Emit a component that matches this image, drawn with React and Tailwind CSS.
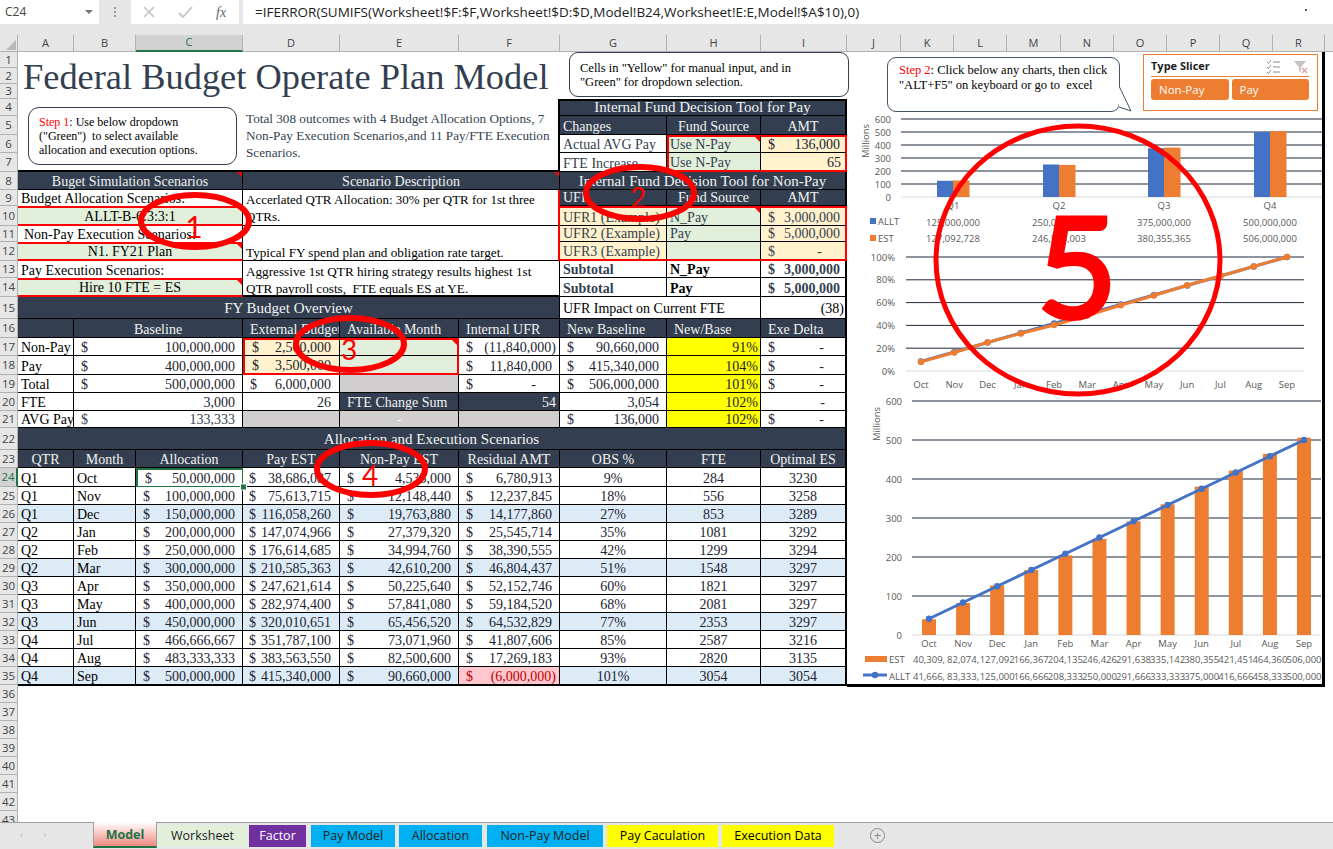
import React from "react";

const RED_T = "border-t-2 border-t-[#ff0000]";
const RED_B = "border-b-2 border-b-[#ff0000]";
const RED_L = "border-l-2 border-l-[#ff0000]";
const RED_R = "border-r-2 border-r-[#ff0000]";
const DARK = "bg-[#333f50] text-[#f2f2f2] justify-center";
const HEAD = "bg-[#333f50] text-[#f2f2f2] justify-start pl-[7px] text-[13px]";
const BIG = "text-[15px]";
const GREEN = "bg-[#e2efda]";
const CREAM = "bg-[#fff2cc]";
const YEL = "bg-[#ffff00] justify-end pr-[2px]";
const GREY = "bg-[#d0cece]";
const LAST = "border-r-2";
const BAND = "bg-[#ddebf7]";

function Cell({ c = "", children }) {
  return (
    <div className={`relative flex items-end min-w-0 overflow-hidden whitespace-nowrap border-r border-b border-black px-[3px] pb-[0.5px] text-[14px] leading-none text-[#1c2431] ${c}`}>
      {children}
    </div>
  );
}

function Money({ v, pr = "pr-[4px]" }) {
  return (
    <div className={`flex w-full justify-between pl-[4px] ${pr}`}>
      <span>$</span>
      <span>{v}</span>
    </div>
  );
}

function Tri() {
  return <span className="absolute top-0 right-0 border-t-[5px] border-l-[5px] border-t-[#ff0000] border-l-transparent" />;
}

const COLS = [
  ["A", 56], ["B", 62], ["C", 107], ["D", 97], ["E", 119], ["F", 101], ["G", 107], ["H", 94], ["I", 86],
  ["J", 54], ["K", 53], ["L", 53], ["M", 54], ["N", 53], ["O", 53], ["P", 53], ["Q", 53], ["R", 52],
];

const ROWS = [16, 16, 15, 17, 19, 18, 19, 18, 16, 20, 16, 19, 17, 19, 22, 19, 18, 19, 18, 18, 17, 22, 18, 19, 18, 18, 18, 18, 18, 18, 18, 18, 18, 18, 18, 18, 18, 18, 18, 18, 18, 18, 18];

const DATA = [
  ["Q1", "Oct", "50,000,000", "38,686,087", "4,533,000", "6,780,913", "9%", "284", "3230"],
  ["Q1", "Nov", "100,000,000", "75,613,715", "12,148,440", "12,237,845", "18%", "556", "3258"],
  ["Q1", "Dec", "150,000,000", "116,058,260", "19,763,880", "14,177,860", "27%", "853", "3289"],
  ["Q2", "Jan", "200,000,000", "147,074,966", "27,379,320", "25,545,714", "35%", "1081", "3292"],
  ["Q2", "Feb", "250,000,000", "176,614,685", "34,994,760", "38,390,555", "42%", "1299", "3294"],
  ["Q2", "Mar", "300,000,000", "210,585,363", "42,610,200", "46,804,437", "51%", "1548", "3297"],
  ["Q3", "Apr", "350,000,000", "247,621,614", "50,225,640", "52,152,746", "60%", "1821", "3297"],
  ["Q3", "May", "400,000,000", "282,974,400", "57,841,080", "59,184,520", "68%", "2081", "3297"],
  ["Q3", "Jun", "450,000,000", "320,010,651", "65,456,520", "64,532,829", "77%", "2353", "3297"],
  ["Q4", "Jul", "466,666,667", "351,787,100", "73,071,960", "41,807,606", "85%", "2587", "3216"],
  ["Q4", "Aug", "483,333,333", "383,563,550", "82,500,600", "17,269,183", "93%", "2820", "3135"],
  ["Q4", "Sep", "500,000,000", "415,340,000", "90,660,000", "(6,000,000)", "101%", "3054", "3054"],
];

const MONTHS = ["Oct", "Nov", "Dec", "Jan", "Feb", "Mar", "Apr", "May", "Jun", "Jul", "Aug", "Sep"];
const EST = [40.309, 82.074, 127.092, 166.367, 204.135, 246.426, 291.638, 335.142, 380.355, 421.451, 464.36, 506];
const ALLT = [41.666, 83.333, 125, 166.666, 208.333, 250, 291.666, 333.333, 375, 416.666, 458.333, 500];
const ESTL = ["40,309,", "82,074,", "127,092", "166,367", "204,135", "246,426", "291,638", "335,142", "380,355", "421,451", "464,360", "506,000"];
const ALLTL = ["41,666,", "83,333,", "125,000", "166,666", "208,333", "250,000", "291,666", "333,333", "375,000", "416,666", "458,333", "500,000"];

function FormulaBar() {
  return (
    <div className="flex h-[35px] items-start gap-[4px] bg-[#e6e6e6] font-['Open_Sans',sans-serif] text-[#444]">
      <div className="flex h-[24px] w-[99px] items-center justify-between bg-white pl-[5px] pr-[6px] text-[12px]">
        <span>C24</span>
        <span className="border-x-[4px] border-t-[4px] border-x-transparent border-t-[#777]" />
      </div>
      <div className="flex h-[24px] w-[24px] flex-col items-center justify-center gap-[2px]">
        <span className="h-[2px] w-[2px] bg-[#999]" />
        <span className="h-[2px] w-[2px] bg-[#999]" />
        <span className="h-[2px] w-[2px] bg-[#999]" />
      </div>
      <div className="flex h-[24px] w-[108px] items-center bg-white">
        <svg width="108" height="24" viewBox="0 0 108 24" className="block">
          <path d="M13 7l10 10M23 7L13 17" stroke="#c4c4c4" strokeWidth="1.6" fill="none" />
          <path d="M48 13l4 4 9-10" stroke="#c4c4c4" strokeWidth="1.8" fill="none" />
          <text x="85" y="17" fontFamily="Liberation Serif, serif" fontStyle="italic" fontSize="14" fill="#666">fx</text>
        </svg>
      </div>
      <div className="flex h-[24px] flex-1 items-center justify-between bg-white pl-[12px] pr-[26px] text-[13.5px] text-[#222]">
        <span>=IFERROR(SUMIFS(Worksheet!$F:$F,Worksheet!$D:$D,Model!B24,Worksheet!E:E,Model!$A$10),0)</span>
        <span className="mb-[4px] h-[2px] w-[2px] bg-[#555]" />
      </div>
    </div>
  );
}

function ColHeaders() {
  return (
    <div className="flex h-[17px] bg-[#e6e6e6] font-['Open_Sans',sans-serif] text-[11px] text-[#444]">
      <div className="relative w-[18px] shrink-0 border-b border-r border-[#b1b1b1]">
        <span className="absolute bottom-[1px] right-[1px] border-b-[10px] border-l-[10px] border-b-[#b8b8b8] border-l-transparent" />
      </div>
      {COLS.map(([n, w]) => (
        <div
          key={n}
          style={{ width: w }}
          className={`flex shrink-0 items-center justify-center border-r border-[#b1b1b1] ${n === "C" ? "border-b-2 border-b-[#217346] bg-[#d2d2d2] text-[#217346]" : "border-b border-b-[#b1b1b1]"}`}
        >
          {n}
        </div>
      ))}
      <div className="flex-1 border-b border-[#b1b1b1]" />
    </div>
  );
}

function RowHeaders() {
  return (
    <div className="w-[18px] shrink-0 overflow-hidden bg-[#e6e6e6] font-['Open_Sans',sans-serif] text-[11.5px] text-[#444]">
      {ROWS.map((h, i) => (
        <div
          key={i}
          style={{ height: h }}
          className={`flex items-center justify-center border-b border-b-[#b1b1b1] border-r ${i === 23 ? "border-r-2 border-r-[#217346] bg-[#d2d2d2] text-[#217346]" : "border-r-[#b1b1b1]"}`}
        >
          {i + 1}
        </div>
      ))}
    </div>
  );
}

function Sheet() {
  return (
    <div className="grid w-[829px] shrink-0 grid-cols-[56px_62px_107px_97px_119px_101px_107px_94px_86px] grid-rows-[47px_17px_19px_18px_19px_18px_16px_20px_16px_19px_17px_19px_22px_19px_18px_19px_18px_18px_17px_22px_18px_19px_18px_18px_18px_18px_18px_18px_18px_18px_18px_18px_18px] font-['Liberation_Serif',serif]">
      {/* Rows 1-3 */}
      <div className="col-span-6 flex items-center whitespace-nowrap pl-[5px] pt-[3px] text-[36.4px] leading-none text-[#333f50]">
        Federal Budget Operate Plan Model
      </div>
      <div className="col-span-3 pl-[9px]">
        <div className="flex h-[45px] w-[280px] flex-col justify-center rounded-[9px] border border-[#333f50] bg-white pl-[10px] text-[12.5px] leading-[14px] text-black">
          <span>Cells in "Yellow" for manual input, and in</span>
          <span>"Green" for dropdown selection.</span>
        </div>
      </div>

      {/* Rows 4-7 */}
      <div className="col-span-3 row-span-4 border-b-2 border-black pl-[10px] pt-[8px]">
        <div className="flex h-[58px] w-[209px] flex-col justify-center rounded-[11px] border border-[#333f50] pl-[10px] text-[12px] leading-[14px] text-black whitespace-pre">
          <span><span className="text-[#ff0000]">Step 1</span>: Use below dropdown</span>
          <span>("Green")  to select available</span>
          <span>allocation and execution options.</span>
        </div>
      </div>
      <div className="col-span-3 row-span-4 border-b-2 border-r-2 border-black pl-[3px] pr-[2px] pt-[11px] text-[13.2px] leading-[17px] text-[#333f50]">
        Total 308 outcomes with 4 Budget Allocation Options, 7 Non-Pay Execution Scenarios,and 11 Pay/FTE Execution Scenarios.
      </div>
      <Cell c={`col-span-3 ${DARK} ${LAST} ${BIG} border-t-2`}>Internal Fund Decision Tool for Pay</Cell>
      <Cell c="bg-[#333f50] text-[#f2f2f2]">Changes</Cell>
      <Cell c={DARK}>Fund Source</Cell>
      <Cell c={`${DARK} ${LAST}`}>AMT</Cell>
      <Cell c="text-[13px] text-[#333f50]">Actual AVG Pay</Cell>
      <Cell c={`${GREEN} ${RED_T} ${RED_L} pl-[1px] text-[#333f50]`}>Use N-Pay<Tri /></Cell>
      <Cell c={`${CREAM} ${RED_T} ${RED_R}`}><Money v="136,000" pr="pr-[2px]" /></Cell>
      <Cell c="text-[13px] text-[#333f50]">FTE Increase</Cell>
      <Cell c={`${GREEN} ${RED_B} ${RED_L} pl-[1px] text-[#333f50]`}>Use N-Pay</Cell>
      <Cell c={`${CREAM} ${RED_B} ${RED_R} justify-end pr-[4px]`}>65</Cell>

      {/* Row 8 */}
      <Cell c={`col-span-3 ${DARK} text-[14.6px]`}>Buget Simulation Scenarios<Tri /></Cell>
      <Cell c={`col-span-3 ${DARK} text-[14.5px]`}>Scenario Description<Tri /></Cell>
      <Cell c={`col-span-3 ${DARK} ${LAST} ${BIG}`}>Internal Fund Decision Tool for Non-Pay</Cell>

      {/* Row 9 */}
      <div className="col-span-3 flex items-end border-r border-black pl-[3px] text-[14px] leading-none text-black whitespace-nowrap">Budget Allocation Scenarios:</div>
      <div className={`col-span-3 row-span-2 flex flex-col justify-center border-b border-black ${RED_R} pl-[3px] text-[13px] leading-[17px] text-black whitespace-nowrap`}>
        <span>Accerlated QTR Allocation: 30% per QTR for 1st three</span>
        <span>QTRs.</span>
      </div>
      <Cell c="bg-[#333f50] text-[#f2f2f2]">UFR</Cell>
      <Cell c={DARK}>Fund Source</Cell>
      <Cell c={`${DARK} ${LAST}`}>AMT</Cell>

      {/* Row 10 */}
      <Cell c={`col-span-3 ${GREEN} justify-center ${RED_T} ${RED_B} text-black`}>ALLT-B-6:3:3:1</Cell>
      <Cell c={`${CREAM} ${RED_T} text-[#333f50] text-[13.3px]`}>UFR1 (Example)</Cell>
      <Cell c={`${GREEN} ${RED_T} text-[#333f50]`}>N_Pay<Tri /></Cell>
      <Cell c={`${CREAM} ${RED_T} ${RED_R} text-[#333f50]`}><Money v="3,000,000" pr="pr-[2px]" /></Cell>

      {/* Row 11 */}
      <div className="col-span-3 flex items-end border-r border-black pl-[6px] text-[14px] leading-none text-black whitespace-nowrap">Non-Pay Execution Scenarios:</div>
      <div className={`col-span-3 row-span-2 flex items-end border-b border-black ${RED_R} pl-[3px] text-[13.2px] leading-[15px] text-black whitespace-nowrap`}>
        Typical FY spend plan and obligation rate target.
      </div>
      <Cell c={`${CREAM} text-[#333f50] text-[13.3px]`}>UFR2 (Example)</Cell>
      <Cell c={`${GREEN} text-[#333f50]`}>Pay</Cell>
      <Cell c={`${CREAM} ${RED_R} text-[#333f50]`}><Money v="5,000,000" pr="pr-[2px]" /></Cell>

      {/* Row 12 */}
      <Cell c={`col-span-3 ${GREEN} justify-center ${RED_T} ${RED_B} text-black`}>N1. FY21 Plan<Tri /></Cell>
      <Cell c={`${CREAM} ${RED_B} text-[#333f50] text-[13.3px]`}>UFR3 (Example)</Cell>
      <Cell c={`${GREEN} ${RED_B}`} />
      <Cell c={`${CREAM} ${RED_B} ${RED_R} text-[#333f50]`}><Money v="-" pr="pr-[20px]" /></Cell>

      {/* Row 13 */}
      <div className="col-span-3 flex items-end border-r border-black pl-[3px] text-[14px] leading-none text-black whitespace-nowrap">Pay Execution Scenarios:</div>
      <div className="col-span-3 row-span-2 flex flex-col justify-center whitespace-pre border-b-2 border-r border-black pl-[3px] pt-[3px] text-[13.2px] leading-[17px] text-black">
        <span>Aggressive 1st QTR hiring strategy results highest 1st</span>
        <span>QTR payroll costs,  FTE equals ES at YE.</span>
      </div>
      <Cell c="font-bold text-[13.5px] text-[#333f50]">Subtotal</Cell>
      <Cell c="font-bold text-[13.5px] text-black">N_Pay</Cell>
      <Cell c={`${LAST} font-bold text-[#333f50]`}><Money v="3,000,000" pr="pr-[2px]" /></Cell>

      {/* Row 14 */}
      <Cell c={`col-span-3 ${GREEN} justify-center ${RED_T} ${RED_B} text-black`}>Hire 10 FTE = ES<Tri /></Cell>
      <Cell c="font-bold text-[13.5px] text-[#333f50]">Subtotal</Cell>
      <Cell c="font-bold text-[13.5px] text-black">Pay</Cell>
      <Cell c={`${LAST} font-bold text-[#333f50]`}><Money v="5,000,000" pr="pr-[2px]" /></Cell>

      {/* Row 15 */}
      <Cell c={`col-span-6 ${DARK} ${BIG} pb-[2px]`}>FY Budget Overview</Cell>
      <Cell c="col-span-2 text-black pb-[2px]">UFR Impact on Current FTE</Cell>
      <Cell c={`${LAST} justify-end pr-[1px] pb-[2px] text-black`}>(38)</Cell>

      {/* Row 16 */}
      <Cell c={DARK} />
      <Cell c={`col-span-2 ${DARK} text-[13px]`}>Baseline</Cell>
      <Cell c={HEAD}>External Budget</Cell>
      <Cell c={HEAD}>Available Month</Cell>
      <Cell c={HEAD}>Internal UFR</Cell>
      <Cell c={HEAD}>New Baseline</Cell>
      <Cell c={HEAD}>New/Base</Cell>
      <Cell c={`${HEAD} ${LAST}`}>Exe Delta</Cell>

      {/* Row 17 */}
      <Cell c="text-black">Non-Pay</Cell>
      <Cell c="col-span-2"><Money v="100,000,000" /></Cell>
      <Cell c={`${CREAM} ${RED_T} ${RED_L}`}><Money v="2,500,000" pr="pr-[5px]" /></Cell>
      <Cell c={`${GREEN} ${RED_T} ${RED_R}`}><Tri /></Cell>
      <Cell><Money v="(11,840,000)" pr="pr-0" /></Cell>
      <Cell><Money v="90,660,000" /></Cell>
      <Cell c={YEL}>91%</Cell>
      <Cell c={LAST}><Money v="-" pr="pr-[18px]" /></Cell>

      {/* Row 18 */}
      <Cell c="text-black">Pay</Cell>
      <Cell c="col-span-2"><Money v="400,000,000" /></Cell>
      <Cell c={`${CREAM} ${RED_B} ${RED_L}`}><Money v="3,500,000" pr="pr-[5px]" /></Cell>
      <Cell c={`${GREEN} ${RED_B} ${RED_R}`} />
      <Cell><Money v="11,840,000" /></Cell>
      <Cell><Money v="415,340,000" /></Cell>
      <Cell c={YEL}>104%</Cell>
      <Cell c={LAST}><Money v="-" pr="pr-[18px]" /></Cell>

      {/* Row 19 */}
      <Cell c="text-black">Total</Cell>
      <Cell c="col-span-2"><Money v="500,000,000" /></Cell>
      <Cell><Money v="6,000,000" pr="pr-[5px]" /></Cell>
      <Cell c={GREY} />
      <Cell><Money v="-" pr="pr-[20px]" /></Cell>
      <Cell><Money v="506,000,000" /></Cell>
      <Cell c={YEL}>101%</Cell>
      <Cell c={LAST}><Money v="-" pr="pr-[18px]" /></Cell>

      {/* Row 20 */}
      <Cell c="text-black">FTE</Cell>
      <Cell c="col-span-2 justify-end pr-[7px]">3,000</Cell>
      <Cell c="justify-end pr-[8px]">26</Cell>
      <Cell c="bg-[#333f50] pl-[7px] text-[#f2f2f2]">FTE Change Sum</Cell>
      <Cell c="justify-end bg-[#333f50] pr-[3px] text-[#f2f2f2]">54</Cell>
      <Cell c="justify-end pr-[7px]">3,054</Cell>
      <Cell c={YEL}>102%</Cell>
      <Cell c={`${LAST} justify-end pr-[20px]`}>-</Cell>

      {/* Row 21 */}
      <Cell c="text-black">AVG Pay</Cell>
      <Cell c="col-span-2 text-[#333f50]"><Money v="133,333" /></Cell>
      <Cell c={GREY} />
      <Cell c={`${GREY} justify-center text-[#f2f2f2]`}>-</Cell>
      <Cell c={GREY} />
      <Cell><Money v="136,000" /></Cell>
      <Cell c={YEL}>102%</Cell>
      <Cell c={LAST}><Money v="-" pr="pr-[18px]" /></Cell>

      {/* Row 22-23 */}
      <Cell c={`col-span-9 ${DARK} ${LAST} ${BIG} pb-[2px]`}>Allocation and Execution Scenarios</Cell>
      <Cell c={DARK}>QTR</Cell>
      <Cell c={DARK}>Month</Cell>
      <Cell c={DARK}>Allocation</Cell>
      <Cell c={DARK}>Pay EST</Cell>
      <Cell c={DARK}>Non-Pay EST</Cell>
      <Cell c={DARK}>Residual AMT</Cell>
      <Cell c={DARK}>OBS %</Cell>
      <Cell c={DARK}>FTE</Cell>
      <Cell c={`${DARK} ${LAST}`}>Optimal ES</Cell>

      {/* Rows 24-35 */}
      {DATA.map((r, i) => {
        const band = i % 3 === 2 ? BAND : "";
        const end = i === 11 ? "border-b-2 -mb-[1px]" : "";
        const neg = i === 11;
        return (
          <React.Fragment key={i}>
            <Cell c={`${band} ${end} text-black`}>{r[0]}</Cell>
            <Cell c={`${band} ${end} text-black`}>{r[1]}</Cell>
            <Cell c={`${band} ${end} ${i === 0 ? "border-2 border-x-[#217346] border-y-[#217346]" : ""}`}><Money v={r[2]} /></Cell>
            <Cell c={`${band} ${end} pl-[2px]`}><Money v={r[3]} pr="pr-[5px]" /></Cell>
            <Cell c={`${band} ${end}`}><Money v={r[4]} /></Cell>
            <Cell c={`${neg ? "bg-[#ffc7ce] text-[#c00000]" : band} ${end}`}><Money v={r[5]} pr={neg ? "pr-0" : "pr-[4px]"} /></Cell>
            <Cell c={`${band} ${end} justify-center`}>{r[6]}</Cell>
            <Cell c={`${band} ${end} justify-center`}>{r[7]}</Cell>
            <Cell c={`${band} ${end} ${LAST} justify-center`}>{r[8]}</Cell>
          </React.Fragment>
        );
      })}
    </div>
  );
}

const chartFont = "Open Sans, sans-serif";
const GRID = "#1f2a3c";
const AXIS = "#d9d9d9";
const LBL = "#595959";

function T({ x, y, a = "middle", s = 9.5, f = LBL, children, ...p }) {
  return <text x={x} y={y} textAnchor={a} fontSize={s} fill={f} fontFamily={chartFont} {...p}>{children}</text>;
}

function Chart1() {
  const y = (v) => 197 - (v * 78) / 600;
  const qs = [
    ["Q1", 954, 125, 127, "125,000,000", "127,092,728"],
    ["Q2", 1060, 250, 246.5, "250,000,000", "246,525,003"],
    ["Q3", 1165, 375, 380, "375,000,000", "380,355,365"],
    ["Q4", 1271, 500, 506, "500,000,000", "506,000,000"],
  ];
  return (
    <svg width="475" height="132" viewBox="848 115 475 132" className="block overflow-visible">
      {[600, 500, 400, 300, 200, 100].map((v) => (
        <line key={v} x1="902" x2="1323" y1={y(v)} y2={y(v)} stroke={GRID} strokeWidth="1" />
      ))}
      <line x1="902" x2="1323" y1="197" y2="197" stroke={AXIS} strokeWidth="1" />
      {[0, 100, 200, 300, 400, 500, 600].map((v) => (
        <T key={v} x="892" y={y(v) + 3.5} a="end">{v}</T>
      ))}
      <T x="0" y="0" transform="translate(870 141) rotate(-90)">Millions</T>
      {qs.map(([q, x, a, e, al, es]) => (
        <g key={q}>
          <rect x={x - 16} y={y(a)} width="16" height={197 - y(a)} fill="#4472c4" />
          <rect x={x} y={y(e)} width="16.5" height={197 - y(e)} fill="#ed7d31" />
          <T x={x} y="208.5">{q}</T>
          <T x={x} y="225.5">{al}</T>
          <T x={x} y="241.5">{es}</T>
        </g>
      ))}
      <rect x="871" y="218" width="6" height="6" fill="#4472c4" />
      <T x="879" y="224.5" a="start">ALLT</T>
      <rect x="871" y="235" width="6" height="6" fill="#ed7d31" />
      <T x="879" y="241.5" a="start">EST</T>
    </svg>
  );
}

function Chart2() {
  const px = (i) => 922 + (i * 366) / 11;
  const py = (v) => 371 - v * 1.14;
  const est = EST.map((v) => (v / 506) * 100);
  const al = ALLT.map((v) => (v / 500) * 100);
  const path = (arr) => arr.map((v, i) => `${px(i)},${py(v)}`).join(" ");
  return (
    <svg width="475" height="150" viewBox="848 247 475 150" className="block overflow-visible">
      {[100, 80, 60, 40, 20].map((v) => (
        <line key={v} x1="907" x2="1305" y1={py(v)} y2={py(v)} stroke={GRID} strokeWidth="1" />
      ))}
      <line x1="907" x2="1305" y1="371" y2="371" stroke={AXIS} strokeWidth="1" />
      {[100, 80, 60, 40, 20, 0].map((v) => (
        <T key={v} x="896" y={py(v) + 3.5} a="end">{v}%</T>
      ))}
      <polyline points={path(al)} fill="none" stroke="#4472c4" strokeWidth="3" />
      {al.map((v, i) => <circle key={i} cx={px(i)} cy={py(v)} r="3.2" fill="#4472c4" />)}
      <polyline points={path(est)} fill="none" stroke="#ed7d31" strokeWidth="3" />
      {est.map((v, i) => <circle key={i} cx={px(i)} cy={py(v)} r="3.2" fill="#ed7d31" />)}
      {MONTHS.map((m, i) => <T key={m} x={px(i)} y="388">{m}</T>)}
    </svg>
  );
}

function Chart3() {
  const px = (i) => 930 + (i * 375) / 11;
  const py = (v) => 635 - v * 0.39;
  return (
    <svg width="475" height="288" viewBox="848 397 475 288" className="block overflow-visible">
      {[600, 500, 400, 300, 200, 100].map((v) => (
        <line key={v} x1="913" x2="1322" y1={py(v)} y2={py(v)} stroke={GRID} strokeWidth="1" />
      ))}
      <line x1="913" x2="1322" y1="635" y2="635" stroke={AXIS} strokeWidth="1" />
      {[600, 500, 400, 300, 200, 100, 0].map((v) => (
        <T key={v} x="903" y={py(v) + 3.5} a="end">{v}</T>
      ))}
      <T x="0" y="0" transform="translate(881 424) rotate(-90)">Millions</T>
      {EST.map((v, i) => (
        <rect key={i} x={px(i) - 7} y={py(v)} width="14" height={635 - py(v)} fill="#ed7d31" />
      ))}
      <polyline points={ALLT.map((v, i) => `${px(i)},${py(v)}`).join(" ")} fill="none" stroke="#4472c4" strokeWidth="3" />
      {ALLT.map((v, i) => <circle key={i} cx={px(i)} cy={py(v)} r="3.2" fill="#4472c4" />)}
      {MONTHS.map((m, i) => <T key={m} x={px(i)} y="647">{m}</T>)}
      <rect x="866" y="656" width="22" height="6" fill="#ed7d31" />
      <T x="890" y="662.5" a="start">EST</T>
      <line x1="864" x2="888" y1="675" y2="675" stroke="#4472c4" strokeWidth="3" />
      <circle cx="876" cy="675" r="3.2" fill="#4472c4" />
      <T x="890" y="679.5" a="start">ALLT</T>
      {ESTL.map((t, i) => <T key={i} x={px(i)} y="662.5">{t}</T>)}
      {ALLTL.map((t, i) => <T key={i} x={px(i)} y="679.5">{t}</T>)}
    </svg>
  );
}

function Slicer() {
  return (
    <div className="ml-[23px] mt-[2px] h-[57px] w-[175px] border border-[#ed7d31] bg-white pl-[7px] pr-[8px] font-['Open_Sans',sans-serif]">
      <div className="flex h-[22px] items-center justify-between border-b border-[#ed7d31] pt-[2px]">
        <span className="text-[11px] font-bold text-[#222]">Type Slicer</span>
        <svg width="44" height="16" viewBox="0 0 44 16" className="-mr-[1px] block">
          <path d="M1 3l1.5 1.5L5 1M1 8l1.5 1.5L5 6M1 13l1.5 1.5L5 11M7 3h7M7 8h7M7 13h7" stroke="#8c8c8c" strokeWidth="1" fill="none" />
          <path d="M28 2h12l-5 6v5l-2-1V8z" fill="#c4c4c4" />
          <path d="M36 9l5 5M41 9l-5 5" stroke="#d9a0a0" strokeWidth="1.2" />
        </svg>
      </div>
      <div className="mt-[2px] flex gap-[3px]">
        <div className="flex h-[21px] w-[78px] items-center rounded-[3px] bg-[#ed7d31] pl-[8px] text-[11.5px] text-white">Non-Pay</div>
        <div className="flex h-[21px] w-[78px] items-center rounded-[3px] bg-[#ed7d31] pl-[8px] text-[11.5px] text-white">Pay</div>
      </div>
    </div>
  );
}

function RightPanel() {
  return (
    <div className="h-[635px] w-[478px] shrink-0 border-b-[3px] border-r-[3px] border-black">
      <div className="flex h-[63px] items-start">
        <div className="relative ml-[40px] mt-[5px] h-[55px] w-[233px] rounded-[9px] border border-[#44546a] bg-white pl-[11px] pt-[5px] font-['Liberation_Serif',serif] text-[12.5px] leading-[14.5px] text-black">
          <div className="whitespace-pre"><span className="text-[#ff0000]">Step 2</span>: Click below any charts, then click</div>
          <div className="whitespace-pre">"ALT+F5" on keyboard or go to  excel</div>
          <svg width="16" height="26" viewBox="0 0 16 26" className="absolute left-[231px] top-[28px] block">
            <path d="M0 0L12 25L0 21" fill="#fff" stroke="#44546a" strokeWidth="1" />
            <path d="M-1 1V20" stroke="#fff" strokeWidth="2" />
          </svg>
        </div>
        <Slicer />
      </div>
      <Chart1 />
      <Chart2 />
      <Chart3 />
    </div>
  );
}

function Tabs() {
  const tabs = [
    ["Worksheet", "w-[91px] bg-[#e2efda] text-[#222]"],
    ["Factor", "ml-[1px] w-[57px] bg-[#7030a0] text-white"],
    ["Pay Model", "ml-[5px] w-[84px] bg-[#00b0f0] text-[#222]"],
    ["Allocation", "ml-[4px] w-[83px] bg-[#00b0f0] text-[#222]"],
    ["Non-Pay Model", "ml-[5px] w-[116px] bg-[#00b0f0] text-[#222]"],
    ["Pay Caculation", "ml-[4px] w-[111px] bg-[#ffff00] text-black"],
    ["Execution Data", "ml-[4px] w-[112px] bg-[#ffff00] text-black"],
  ];
  return (
    <div className="flex h-[27px] items-start border-t border-[#9f9f9f] bg-[#e6e6e6] font-['Open_Sans',sans-serif] text-[12.5px]">
      <div className="flex h-full w-[93px] items-center gap-[20px] pl-[20px] pb-[4px] text-[11px] text-[#bdbdbd]">
        <span>‹</span>
        <span>›</span>
      </div>
      <div className="-mt-[1px] flex h-[26px] w-[64px] items-center justify-center border-b-[2px] border-x border-x-[#9f9f9f] border-b-[#217346] bg-[linear-gradient(#ffffff,#f08a80)] pt-[3px] font-bold text-[#217346]">Model</div>
      {tabs.map(([t, c]) => (
        <div key={t} className={`mt-[2px] flex h-[22px] items-center justify-center ${c}`}>{t}</div>
      ))}
      <div className="ml-[36px] mt-[5px] flex h-[15px] w-[15px] items-center justify-center rounded-full border border-[#8a8a8a] text-[13px] leading-none text-[#8a8a8a]">+</div>
    </div>
  );
}

function Annotations() {
  const ring = { fill: "none", stroke: "#ff0000", strokeWidth: 6 };
  const num = { fill: "#ff0000", fontFamily: "Lato, sans-serif", textAnchor: "middle" };
  return (
    <svg width="1333" height="849" viewBox="0 0 1333 849" className="pointer-events-none absolute left-0 top-0 block">
      <ellipse cx="195" cy="221" rx="54" ry="26" {...ring} />
      <text x="194" y="238" fontSize="30" {...num}>1</text>
      <ellipse cx="640" cy="193" rx="54" ry="26" {...ring} />
      <text x="638" y="208" fontSize="28" {...num}>2</text>
      <ellipse cx="350" cy="344" rx="54" ry="26" {...ring} />
      <text x="349" y="360" fontSize="28" {...num}>3</text>
      <ellipse cx="371" cy="469" rx="54" ry="26" {...ring} />
      <text x="370" y="486" fontSize="28" {...num}>4</text>
      <ellipse cx="1078" cy="260" rx="142" ry="134" fill="none" stroke="#ff0000" strokeWidth="5" />
      <text x="1077" y="318" fontSize="140" stroke="#ff0000" strokeWidth="4" {...num}>5</text>
      <rect x="240.5" y="484" width="6" height="6" fill="#217346" stroke="#fff" strokeWidth="1" />
    </svg>
  );
}

export default function App() {
  return (
    <div className="relative h-[849px] w-[1333px] overflow-hidden bg-white">
      <FormulaBar />
      <ColHeaders />
      <div className="flex h-[770px] items-start overflow-hidden">
        <RowHeaders />
        <Sheet />
        <RightPanel />
      </div>
      <Tabs />
      <Annotations />
    </div>
  );
}
